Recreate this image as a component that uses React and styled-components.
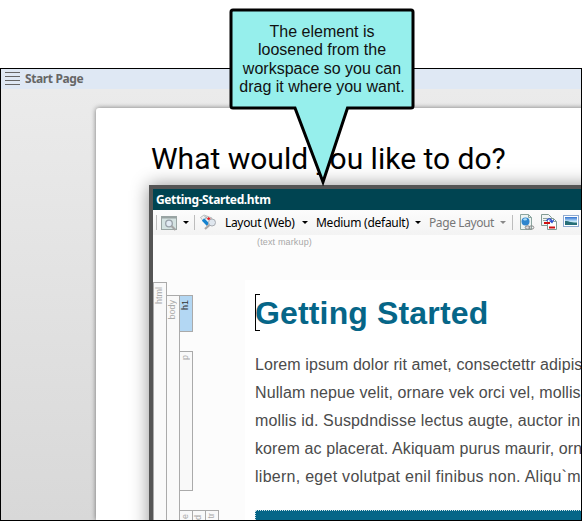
import React from "react";
import styled, { createGlobalStyle } from "styled-components";

const GlobalStyle = createGlobalStyle`
  body { margin: 0; background: #fff; overflow: hidden; }
  * { box-sizing: border-box; }
`;

const Screen = styled.main`
  position: relative;
  width: 582px;
  height: 521px;
  padding-top: 68px;
  overflow: hidden;
  background: #fff;
  font-family: "Liberation Sans", Arial, sans-serif;
`;

const Workspace = styled.section`
  display: flex;
  flex-direction: column;
  width: 582px;
  height: 453px;
  border: 1px solid #000;
  background: linear-gradient(#ebebeb 20px, #d8d8d8);
  overflow: hidden;
`;

const TabBar = styled.header`
  display: flex;
  flex: none;
  align-items: center;
  gap: 5px;
  height: 20px;
  padding-left: 4px;
  background: #dfe8f4;
`;

const TabTitle = styled.span`
  font: bold 12px/20px "Noto Sans", sans-serif;
  letter-spacing: -0.38px;
  color: #666;
  white-space: nowrap;
`;

const Page = styled.article`
  flex: 1;
  min-height: 0;
  margin: 19px 0 0 95px;
  padding-left: 53px;
  width: 520px;
  border-radius: 3px 0 0 0;
  background: #fff;
  box-shadow: 0 0 5px rgba(0, 0, 0, 0.5);
`;

const PageHeading = styled.h1`
  margin: 0;
  height: 77px;
  padding: 31px 0 0 2px;
  font: 400 30px/40px Roboto, sans-serif;
  color: #000;
  white-space: nowrap;
`;

const FloatingWindow = styled.section`
  width: 480px;
  height: 400px;
  border: 4px solid #555;
  background: #fcfcfc;
  box-shadow: 0 0 17px rgba(0, 0, 0, 0.42);
`;

const WindowTitle = styled.div`
  height: 21px;
  padding: 1px 0 0 3px;
  background: #004451;
  color: #fff;
  font: bold 12px/20px "Noto Sans", sans-serif;
  letter-spacing: -0.37px;
`;

const Toolbar = styled.div`
  display: flex;
  align-items: center;
  height: 25px;
  padding-left: 3px;
  background: linear-gradient(#fcfcfc, #f3f3f3);
`;

const Slot = styled.span`
  display: flex;
  flex: none;
  align-items: center;
  width: ${(p) => p.$w}px;
  height: 25px;
`;

const Divider = styled.i`
  width: 1px;
  height: 15px;
  background: #bdbdbd;
`;

const Caret = styled.i`
  border: 3px solid transparent;
  border-top-color: ${(p) => (p.$muted ? "#888" : "#000")};
  border-bottom: 0;
`;

const ToolLabel = styled.span`
  font: 12px/25px "Noto Sans", sans-serif;
  letter-spacing: ${(p) => p.$track}px;
  color: ${(p) => (p.$muted ? "#777" : "#000")};
  white-space: nowrap;
`;

const MarkupHint = styled.div`
  height: 47px;
  padding: 2px 0 0 104px;
  font-size: 9px;
  line-height: 10px;
  letter-spacing: 0.15px;
  color: #a8a8a8;
`;

const Editor = styled.div`
  display: flex;
  height: 300px;
`;

const TagGutter = styled.aside`
  display: flex;
  flex: none;
  width: 92px;
  height: 240px;
`;

const TagColumn = styled.div`
  display: flex;
  flex-direction: column;
  align-items: flex-start;
  gap: ${(p) => p.$gap || 0}px;
  margin-top: ${(p) => p.$top || 0}px;
`;

const Tag = styled.div`
  display: flex;
  flex: none;
  width: ${(p) => p.$w || 13}px;
  height: ${(p) => p.$h}px;
  padding-top: ${(p) => p.$pad ?? 4}px;
  border: 1px solid #aaa;
  border-left-width: ${(p) => (p.$first ? 1 : 0)}px;
  background: ${(p) => (p.$active ? "#b3d7f3" : "#f9f9f9")};
  color: ${(p) => (p.$active ? "#333" : "#aaa")};
`;

const TagRow = styled.div`
  display: flex;
`;

const TagName = styled.span`
  align-self: flex-start;
  writing-mode: vertical-rl;
  transform: rotate(180deg);
  font-size: 9px;
  line-height: 11px;
`;

const Document = styled.div`
  flex: 1;
  margin-top: -2px;
  padding-left: 10px;
  background: #fff;
`;

const DocHeading = styled.h2`
  position: relative;
  margin: 14px 0 0;
  height: 38px;
  font: bold 32px/38px "Liberation Sans", Arial, sans-serif;
  letter-spacing: 0.15px;
  color: #066688;
  white-space: nowrap;
`;

const Bracket = styled.i`
  position: absolute;
  left: 0;
  top: 0;
  width: 5px;
  height: 37px;
  border: 1px solid #000;
  border-right: 0;
`;

const Paragraph = styled.div`
  padding-top: 19px;
  height: 178px;
  color: #4b4b4b;
  font-size: 16px;
  line-height: 28px;
`;

const Line = styled.div`
  white-space: nowrap;
  letter-spacing: ${(p) => p.$track || 0}px;
`;

const TableHead = styled.div`
  height: 20px;
  border: 1px dotted #cfe2e8;
  background: #066688;
`;

const Callout = styled.div`
  position: absolute;
  left: 229px;
  top: 8px;
  width: 186px;
  height: 178px;
`;

const CalloutText = styled.div`
  position: absolute;
  inset: 15px 0 auto 0;
  text-align: center;
  font-size: 16px;
  line-height: 18.3px;
  color: #111;
`;

const MenuIcon = () => (
  <svg width="15" height="14">
    <path d="M0 .5h15M0 4.5h15M0 8.5h15M0 12.5h15" stroke="#666" />
  </svg>
);

const PreviewIcon = () => (
  <svg width="17" height="16" viewBox="0 0 17 16">
    <rect x=".5" y="1.5" width="15" height="13" fill="#d5e3e2" stroke="#9aa5a4" />
    <path d="M1 2.5h14" stroke="#98a3a2" strokeWidth="2" />
    <circle cx="8" cy="8.5" r="3.3" fill="#e3ebf4" stroke="#98a0a8" strokeWidth="1.3" />
    <path d="m10.5 11 4 4" stroke="#a5a5a5" strokeWidth="2.2" />
  </svg>
);

const StyleIcon = () => (
  <svg width="17" height="17" viewBox="0 0 17 17">
    <path d="M.5 3.5 4 1l8 3-4 9z" fill="#eef1f2" stroke="#a7b0b3" strokeWidth=".8" />
    <path d="m4.5 2 3 3M7 2.500l-2 3" stroke="#929b9e" strokeWidth=".8" />
    <path d="m3 5.500 5 5" stroke="#1683cf" strokeWidth="3.2" />
    <path d="m7.500 4 2.500 1.500" stroke="#e52228" strokeWidth="2.6" />
    <circle cx="12" cy="8.500" r="3.500" fill="#dfe6ee" stroke="#a8acb2" />
    <path d="m9.500 11-4.500 4" stroke="#ada6a4" strokeWidth="2.2" />
  </svg>
);

const LinkIcon = () => (
  <svg width="15" height="17" viewBox="0 0 15 17">
    <path d="M.5.5h8l3 3v12H.5z" fill="#edf4f2" stroke="#8ba59f" />
    <path d="M8.5.5v3h3" fill="none" stroke="#8ba59f" />
    <circle cx="5.5" cy="7.5" r="4" fill="#2d86ce" />
    <path d="M3 5.5c2-2 4-1 4 0S4 7 3 5.5" fill="#a9dcf6" />
    <ellipse cx="7.5" cy="13.5" rx="2.3" ry="1.7" fill="#ddd" stroke="#888" />
    <ellipse cx="11.5" cy="13.5" rx="2.3" ry="1.7" fill="none" stroke="#888" />
  </svg>
);

const CrossRefIcon = () => (
  <svg width="17" height="17" viewBox="0 0 17 17">
    <path d="M.5.5h7l3 3v8H.5z" fill="#f1f5f3" stroke="#829b94" />
    <path d="M6.500 4.5h6l3 3v8h-9z" fill="#fff" stroke="#829b94" />
    <path d="M12.500 4.500v3h3M2 4.500h4M2 6.500h4" fill="none" stroke="#8ea39d" />
    <path d="M3 9h6M8 13.500h6" stroke="#cf1010" strokeWidth="2" />
    <path d="M5.500 7c1-3 5-3 5.500 1m-2.500-1.500 2.500 2 1.500-2.500" fill="none" stroke="#3152d0" strokeWidth="1.2" />
  </svg>
);

const PictureIcon = () => (
  <svg width="16" height="16" viewBox="0 0 16 16">
    <defs>
      <linearGradient id="sky" x1="0" y1="0" x2="0" y2="1">
        <stop stopColor="#2f6fce" />
        <stop offset=".5" stopColor="#b8def8" />
        <stop offset=".62" stopColor="#d5edf4" />
        <stop offset=".75" stopColor="#347b80" />
        <stop offset="1" stopColor="#145a70" />
      </linearGradient>
    </defs>
    <rect x=".5" y=".5" width="15" height="11" fill="#fff" stroke="#8eaad0" />
    <rect x="2" y="2" width="12" height="8" fill="url(#sky)" />
    <path d="M2 6c5 0 6 2 12 2v2H2z" fill="#276f78" />
  </svg>
);

const Separator = ({ w }) => <Slot $w={w}><Divider /></Slot>;
const Arrow = ({ w, muted }) => <Slot $w={w}><Caret $muted={muted} /></Slot>;
const Label = ({ w, track, muted, children }) => (
  <Slot $w={w}><ToolLabel $track={track} $muted={muted}>{children}</ToolLabel></Slot>
);

const lines = [
  ["Lorem ipsum dolor rit amet, consectettr adipis", 0.08],
  ["Nullam nepue velit, ornare vek orci vel, mollis", 0.1],
  ["mollis id. Suspdndisse lectus augte, auctor in", 0.13],
  ["korem ac placerat. Akiquam purus maurir, orn", 0.1],
  ["libern, eget volutpat enil finibus non. Aliqu`m", 0.27],
];

export default function App() {
  return (
    <Screen>
      <GlobalStyle />
      <Workspace>
        <TabBar><MenuIcon /><TabTitle>Start Page</TabTitle></TabBar>
        <Page>
          <PageHeading>What would you like to do?</PageHeading>
          <FloatingWindow>
            <WindowTitle>Getting-Started.htm</WindowTitle>
            <Toolbar>
              <Separator w={5} />
              <Slot $w={22}><PreviewIcon /></Slot>
              <Arrow w={11} />
              <Separator w={6} />
              <Slot $w={25}><StyleIcon /></Slot>
              <Label w={77} track={-0.33}>Layout (Web)</Label>
              <Arrow w={14} />
              <Label w={99} track={-0.26}>Medium (default)</Label>
              <Arrow w={14} />
              <Label w={71} track={-0.4} muted>Page Layout</Label>
              <Arrow w={12} muted />
              <Separator w={8} />
              <Slot $w={21}><LinkIcon /></Slot>
              <Slot $w={22}><CrossRefIcon /></Slot>
              <Slot $w={18}><PictureIcon /></Slot>
            </Toolbar>
            <MarkupHint>(text markup)</MarkupHint>
            <Editor>
              <TagGutter>
                <TagColumn><Tag $h={260} $w={14} $first><TagName>html</TagName></Tag></TagColumn>
                <TagColumn $top={13}><Tag $h={247}><TagName>body</TagName></Tag></TagColumn>
                <TagColumn $top={13} $gap={19}>
                  <Tag $h={37} $active><TagName>h1</TagName></Tag>
                  <Tag $h={140} $pad={3}><TagName>p</TagName></Tag>
                  <TagRow>
                    <Tag $h={40} $pad={3}><TagName>e</TagName></Tag>
                    <Tag $h={40} $pad={4}><TagName>d</TagName></Tag>
                    <Tag $h={40} $pad={2}><TagName>tr</TagName></Tag>
                  </TagRow>
                </TagColumn>
              </TagGutter>
              <Document>
                <DocHeading><Bracket />Getting Started</DocHeading>
                <Paragraph>
                  {lines.map(([text, track]) => <Line key={text} $track={track}>{text}</Line>)}
                </Paragraph>
                <TableHead />
              </Document>
            </Editor>
          </FloatingWindow>
        </Page>
      </Workspace>
      <Callout>
        <svg width="186" height="178">
          <path d="M4 2H182Q184 2 184 4V98Q184 100 182 100H118.500L94 174L66 100H4Q2 100 2 98V4Q2 2 4 2Z" fill="#96efec" stroke="#000" strokeWidth="3" />
        </svg>
        <CalloutText>
          <Line>The element is</Line>
          <Line>loosened from the</Line>
          <Line>workspace so you can</Line>
          <Line>drag it where you want.</Line>
        </CalloutText>
      </Callout>
    </Screen>
  );
}
